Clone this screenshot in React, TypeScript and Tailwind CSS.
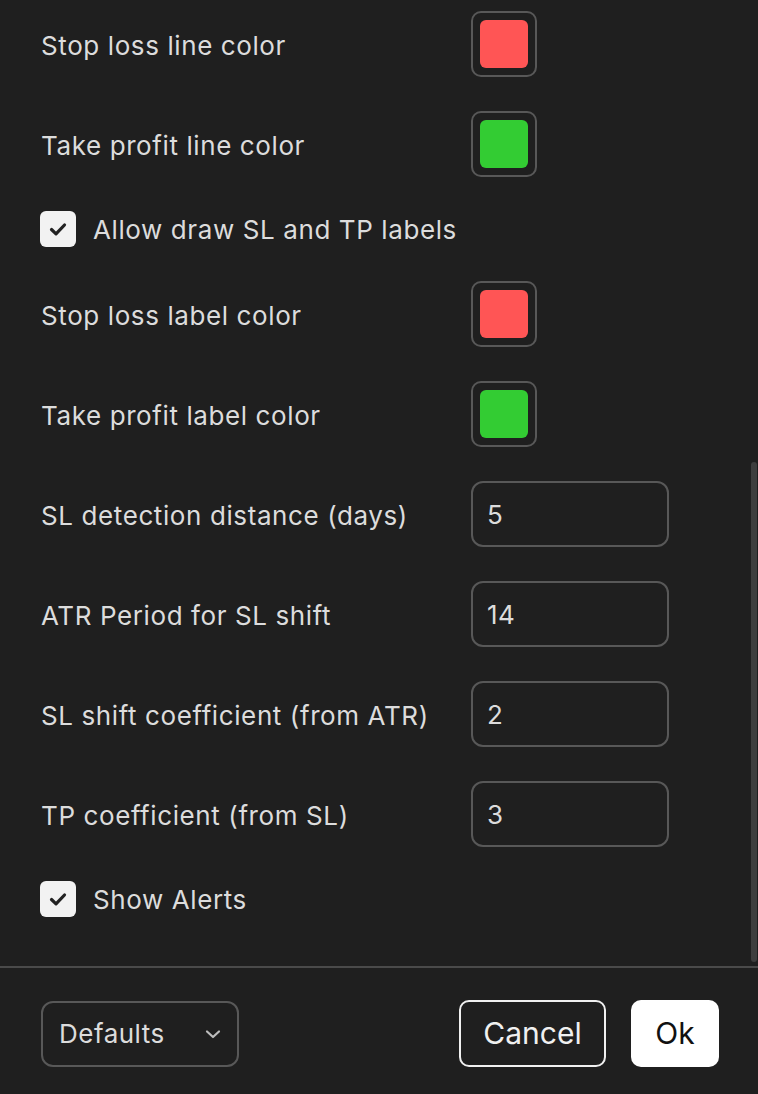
import React from "react";

const font = { fontFamily: "Inter, 'Noto Sans', sans-serif" };

function Swatch({ color }: { color: string }) {
  return (
    <div className="w-[66px] h-[66px] rounded-[10px] border-2 border-[#585858] flex items-center justify-center">
      <div className={`w-[48px] h-[48px] rounded-[6px] ${color}`} />
    </div>
  );
}

function Input({ value }: { value: string }) {
  return (
    <div className="w-[198px] h-[66px] rounded-[12px] border-2 border-[#585858] flex items-center pl-[14px] pt-[1px] text-[26px] text-[#dcdcdc] tracking-[0.5px]">
      {value}
    </div>
  );
}

function Row({ label, children }: { label: string; children: React.ReactNode }) {
  return (
    <div className="flex items-center h-[66px]">
      <div className="w-[430px] pt-[2px] text-[26px] text-[#dcdcdc] tracking-[0.6px]">{label}</div>
      {children}
    </div>
  );
}

function Check({ label }: { label: string }) {
  return (
    <div className="flex items-center h-[36px] -ml-[1px]">
      <div className="w-[36px] h-[36px] rounded-[6px] bg-[#f2f2f2] flex items-center justify-center">
        <svg width="22" height="22" viewBox="0 0 22 22" fill="none">
          <path d="M4.5 11.5 L9 15.8 L17.5 7" stroke="#222" strokeWidth="3.2" strokeLinecap="round" strokeLinejoin="round" />
        </svg>
      </div>
      <div className="ml-[17px] text-[26px] text-[#dcdcdc] tracking-[0.6px]">{label}</div>
    </div>
  );
}

export default function App() {
  return (
    <div className="w-[758px] h-[1094px] bg-[#1f1f1f] flex flex-col overflow-hidden" style={font}>
      <div className="relative h-[966px] flex flex-col gap-[34px] pt-[11px] pl-[41px]">
        <Row label="Stop loss line color"><Swatch color="bg-[#ff5555]" /></Row>
        <Row label="Take profit line color"><Swatch color="bg-[#33cc33]" /></Row>
        <Check label="Allow draw SL and TP labels" />
        <Row label="Stop loss label color"><Swatch color="bg-[#ff5555]" /></Row>
        <Row label="Take profit label color"><Swatch color="bg-[#33cc33]" /></Row>
        <Row label="SL detection distance (days)"><Input value="5" /></Row>
        <Row label="ATR Period for SL shift"><Input value="14" /></Row>
        <Row label="SL shift coefficient (from ATR)"><Input value="2" /></Row>
        <Row label="TP coefficient (from SL)"><Input value="3" /></Row>
        <Check label="Show Alerts" />
        <div className="absolute right-[1px] top-[462px] w-[6px] h-[500px] rounded-full bg-[#3e3e3e]" />
      </div>
      <div className="h-[2px] bg-[#4a4a4a]" />
      <div className="flex items-center justify-between pl-[41px] pr-[39px] pt-[32px]">
        <div className="w-[198px] h-[66px] rounded-[12px] border-2 border-[#585858] flex items-center justify-between pl-[16px] pr-[14px] text-[26px] text-[#dcdcdc] tracking-[0.5px]">
          <span>Defaults</span>
          <svg width="20" height="20" viewBox="0 0 20 20" fill="none">
            <path d="M4 7.5 L10 13 L16 7.5" stroke="#bdbdbd" strokeWidth="2.2" strokeLinecap="round" strokeLinejoin="round" />
          </svg>
        </div>
        <div className="flex items-center gap-[25px]">
          <div className="w-[147px] h-[67px] rounded-[10px] border-2 border-[#f0f0f0] flex items-center justify-center text-[30px] text-[#f0f0f0]">
            Cancel
          </div>
          <div className="w-[88px] h-[67px] rounded-[10px] bg-white flex items-center justify-center text-[30px] text-[#111]">
            Ok
          </div>
        </div>
      </div>
    </div>
  );
}
